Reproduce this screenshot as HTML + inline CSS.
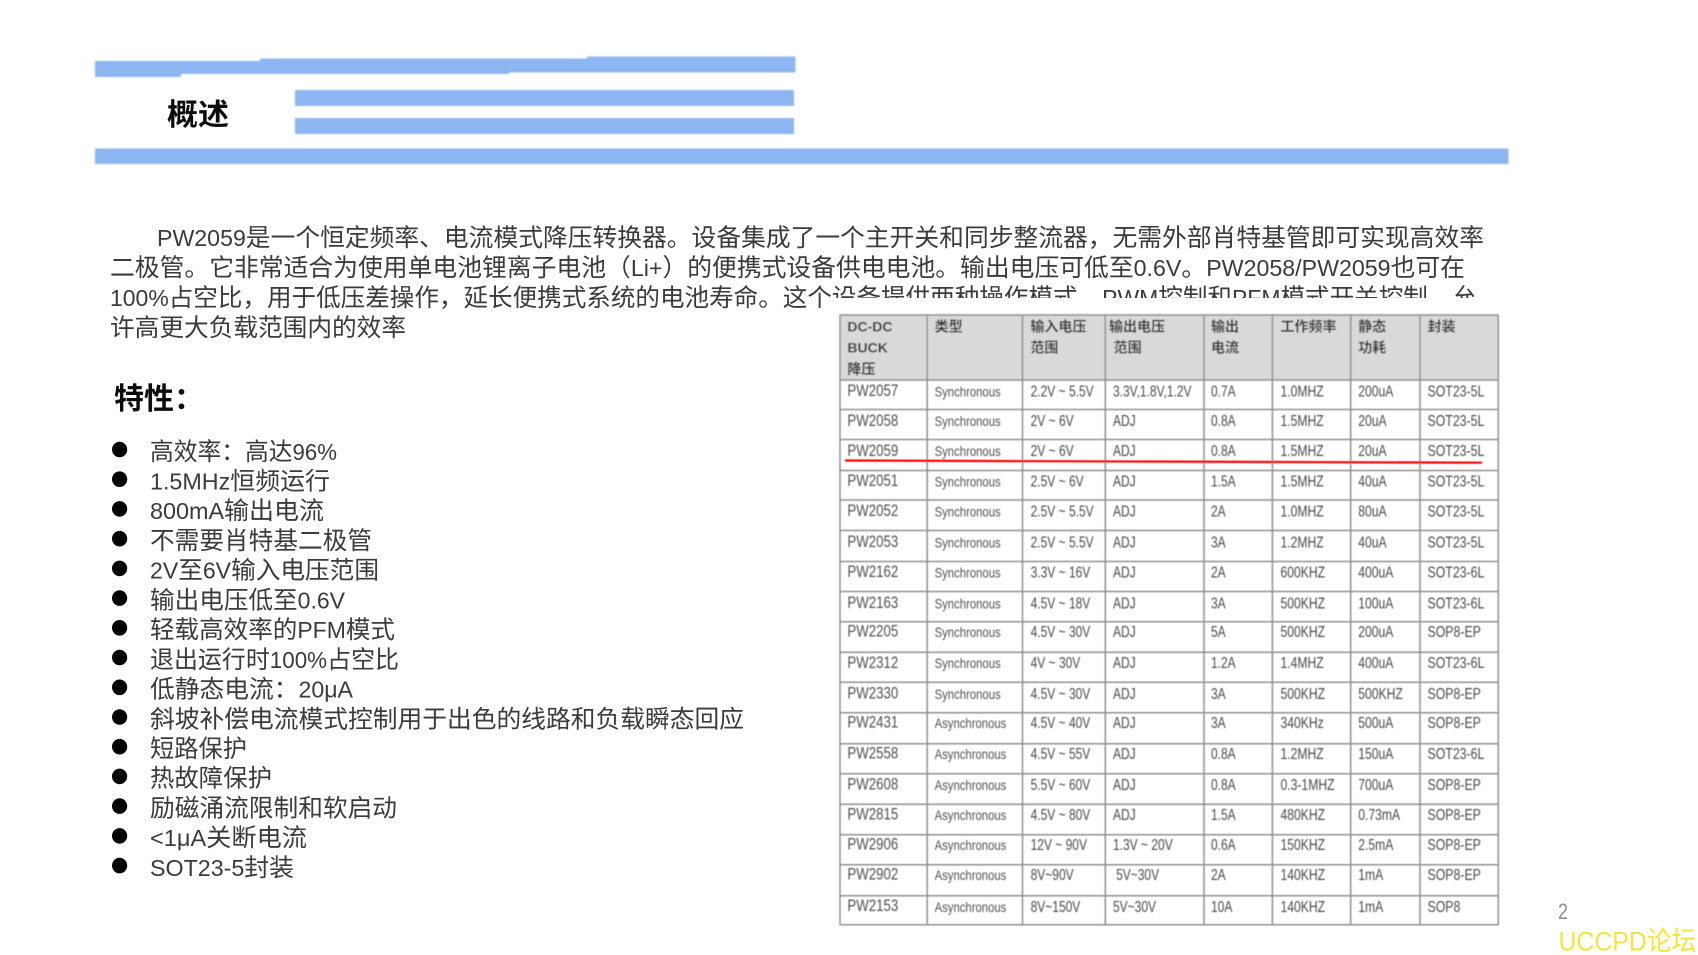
<!DOCTYPE html>
<html lang="zh-CN">
<head>
<meta charset="utf-8">
<title>PW2059 概述</title>
<style>
html,body{margin:0;padding:0;background:#fff;width:1698px;height:955px;overflow:hidden}
svg{display:block}
text{font-family:"Liberation Sans","Noto Sans CJK SC",sans-serif;white-space:pre}
.b{fill:#3a3a3a;font-size:24.6px}
.l{font-size:23px}
.h{fill:#111;font-weight:700;font-size:30px}
.pw text{font-size:17px;fill:#505050}
.sy text{font-size:14px;fill:#505050}
.c text{font-size:15.6px;fill:#484848}
.hd text{font-size:14px;font-weight:700;fill:#3a3a3a}
.bar{fill:#8cb5f1}
</style>
</head>
<body>
<svg width="1698" height="955" viewBox="0 0 1698 955" xmlns="http://www.w3.org/2000/svg">
<defs>
<filter id="s" x="-2%" y="-2%" width="104%" height="104%"><feGaussianBlur stdDeviation="0.55"/></filter>
<filter id="t" x="-2%" y="-2%" width="104%" height="104%"><feGaussianBlur stdDeviation="0.25"/></filter>
<filter id="u" x="-2%" y="-20%" width="104%" height="140%"><feGaussianBlur stdDeviation="0.9"/></filter>
</defs>
<rect width="1698" height="955" fill="#fff"/>

<g filter="url(#u)">
<rect class="bar" x="95" y="61" width="86" height="16"/>
<rect class="bar" x="181" y="61" width="79" height="13"/>
<rect class="bar" x="260" y="58.5" width="249" height="15.5"/>
<rect class="bar" x="509" y="58.5" width="78" height="14"/>
<rect class="bar" x="587" y="56.5" width="208.5" height="16"/>
<rect class="bar" x="295" y="90" width="499" height="16"/>
<rect class="bar" x="295" y="118" width="499" height="16"/>
<rect class="bar" x="95" y="148.5" width="1413.5" height="15.5"/>
</g>

<g filter="url(#t)">
<text class="h" x="167" y="125" textLength="62" lengthAdjust="spacingAndGlyphs">概述</text>

<text class="b" x="157" y="246" textLength="1327" lengthAdjust="spacingAndGlyphs"><tspan class="l">PW2059</tspan>是一个恒定频率、电流模式降压转换器。设备集成了一个主开关和同步整流器，无需外部肖特基管即可实现高效率</text>
<text class="b" x="110" y="276" textLength="1355" lengthAdjust="spacingAndGlyphs">二极管。它非常适合为使用单电池锂离子电池（<tspan class="l">Li+</tspan>）的便携式设备供电电池。输出电压可低至<tspan class="l">0.6V</tspan>。<tspan class="l">PW2058/PW2059</tspan>也可在</text>
<text class="b" x="110" y="306" textLength="1367" lengthAdjust="spacingAndGlyphs"><tspan class="l">100%</tspan>占空比，用于低压差操作，延长便携式系统的电池寿命。这个设备提供两种操作模式，<tspan class="l">PWM</tspan>控制和<tspan class="l">PFM</tspan>模式开关控制，允</text>
<rect x="830" y="298" width="680" height="18" fill="#fff"/>
<text class="b" x="110" y="336" textLength="296" lengthAdjust="spacingAndGlyphs">许高更大负载范围内的效率</text>

<text class="h" x="114" y="409" textLength="90" lengthAdjust="spacingAndGlyphs">特性：</text>

<g fill="#000">
<ellipse cx="119.6" cy="449.5" rx="7.6" ry="7.8"/>
<ellipse cx="119.6" cy="479.2" rx="7.6" ry="7.8"/>
<ellipse cx="119.6" cy="508.9" rx="7.6" ry="7.8"/>
<ellipse cx="119.6" cy="538.7" rx="7.6" ry="7.8"/>
<ellipse cx="119.6" cy="568.4" rx="7.6" ry="7.8"/>
<ellipse cx="119.6" cy="598.1" rx="7.6" ry="7.8"/>
<ellipse cx="119.6" cy="627.8" rx="7.6" ry="7.8"/>
<ellipse cx="119.6" cy="657.5" rx="7.6" ry="7.8"/>
<ellipse cx="119.6" cy="687.3" rx="7.6" ry="7.8"/>
<ellipse cx="119.6" cy="717" rx="7.6" ry="7.8"/>
<ellipse cx="119.6" cy="746.7" rx="7.6" ry="7.8"/>
<ellipse cx="119.6" cy="776.4" rx="7.6" ry="7.8"/>
<ellipse cx="119.6" cy="806.1" rx="7.6" ry="7.8"/>
<ellipse cx="119.6" cy="835.9" rx="7.6" ry="7.8"/>
<ellipse cx="119.6" cy="865.6" rx="7.6" ry="7.8"/>
</g>

<text class="b" x="150" y="460" textLength="187" lengthAdjust="spacingAndGlyphs">高效率：高达<tspan class="l">96%</tspan></text>
<text class="b" x="150" y="489.5" textLength="180" lengthAdjust="spacingAndGlyphs"><tspan class="l">1.5MHz</tspan>恒频运行</text>
<text class="b" x="150" y="519.2" textLength="174" lengthAdjust="spacingAndGlyphs"><tspan class="l">800mA</tspan>输出电流</text>
<text class="b" x="150" y="549" textLength="222" lengthAdjust="spacingAndGlyphs">不需要肖特基二极管</text>
<text class="b" x="150" y="578.7" textLength="229" lengthAdjust="spacingAndGlyphs"><tspan class="l">2V</tspan>至<tspan class="l">6V</tspan>输入电压范围</text>
<text class="b" x="150" y="608.4" textLength="195" lengthAdjust="spacingAndGlyphs">输出电压低至<tspan class="l">0.6V</tspan></text>
<text class="b" x="150" y="638.1" textLength="245" lengthAdjust="spacingAndGlyphs">轻载高效率的<tspan class="l">PFM</tspan>模式</text>
<text class="b" x="150" y="667.9" textLength="249" lengthAdjust="spacingAndGlyphs">退出运行时<tspan class="l">100%</tspan>占空比</text>
<text class="b" x="150" y="697.6" textLength="203" lengthAdjust="spacingAndGlyphs">低静态电流：<tspan class="l">20μA</tspan></text>
<text class="b" x="150" y="727.3" textLength="594" lengthAdjust="spacingAndGlyphs">斜坡补偿电流模式控制用于出色的线路和负载瞬态回应</text>
<text class="b" x="150" y="757" textLength="97" lengthAdjust="spacingAndGlyphs">短路保护</text>
<text class="b" x="150" y="786.7" textLength="122" lengthAdjust="spacingAndGlyphs">热故障保护</text>
<text class="b" x="150" y="816.5" textLength="247" lengthAdjust="spacingAndGlyphs">励磁涌流限制和软启动</text>
<text class="b" x="150" y="846.2" textLength="157" lengthAdjust="spacingAndGlyphs"><tspan class="l">&lt;1μA</tspan>关断电流</text>
<text class="b" x="150" y="875.9" textLength="144" lengthAdjust="spacingAndGlyphs"><tspan class="l">SOT23-5</tspan>封装</text>
</g>

<g filter="url(#s)">
<rect x="840" y="315" width="658.3" height="65" fill="#d9d9d9"/>
<g stroke="#8f8f8f" stroke-width="1.5" fill="none">
<path d="M840 315H1498.3M840 380H1498.3M840 409.5H1498.3M840 439.5H1498.3M840 470.5H1498.3M840 500H1498.3M840 530.5H1498.3M840 561.5H1498.3M840 591.5H1498.3M840 621.7H1498.3M840 652.3H1498.3M840 682.3H1498.3M840 712.7H1498.3M840 743.7H1498.3M840 773.7H1498.3M840 804.3H1498.3M840 834.7H1498.3M840 864.7H1498.3M840 895.7H1498.3M840 924.7H1498.3"/>
<path d="M840 315V925M927.2 315V925M1022.5 315V925M1105.3 315V925M1204 315V925M1272.4 315V925M1350.7 315V925M1420 315V925M1498.3 315V925"/>
</g>
<g class="hd">
<text x="847.4" y="331.5">DC-DC</text>
<text x="847.4" y="352.5">BUCK</text>
<text x="847.4" y="374">降压</text>
<text x="934.6" y="331.5">类型</text>
<text x="1030.4" y="331.5">输入电压</text>
<text x="1030.4" y="352.5">范围</text>
<text x="1109" y="331.5">输出电压</text>
<text x="1113.6" y="352.5">范围</text>
<text x="1211" y="331.5">输出</text>
<text x="1211" y="352.5">电流</text>
<text x="1280.5" y="331.5">工作频率</text>
<text x="1358.2" y="331.5">静态</text>
<text x="1358.2" y="352.5">功耗</text>
<text x="1427.5" y="331.5">封装</text>
</g>

<g class="pw" transform="translate(847.4,0) scale(.78,1)">
<text y="396">PW2057</text><text y="426">PW2058</text><text y="456">PW2059</text><text y="486">PW2051</text><text y="516">PW2052</text><text y="547">PW2053</text><text y="577">PW2162</text><text y="608">PW2163</text><text y="636.5">PW2205</text><text y="668">PW2312</text><text y="698.5">PW2330</text><text y="727.5">PW2431</text><text y="758.5">PW2558</text><text y="789.5">PW2608</text><text y="819.5">PW2815</text><text y="849.5">PW2906</text><text y="879.5">PW2902</text><text y="911">PW2153</text>
</g>

<g class="sy" transform="translate(934.6,0) scale(.81,1)">
<text y="396.5">Synchronous</text><text y="426">Synchronous</text><text y="456">Synchronous</text><text y="486.7">Synchronous</text><text y="516.7">Synchronous</text><text y="547.3">Synchronous</text><text y="577.7">Synchronous</text><text y="608.3">Synchronous</text><text y="637">Synchronous</text><text y="668">Synchronous</text><text y="699">Synchronous</text><text y="728">Asynchronous</text><text y="759">Asynchronous</text><text y="790">Asynchronous</text><text y="820">Asynchronous</text><text y="850">Asynchronous</text><text y="880">Asynchronous</text><text y="912">Asynchronous</text>
</g>

<g class="c" transform="translate(1030.6,0) scale(.77,1)">
<text y="396.5">2.2V ~ 5.5V</text><text y="426">2V ~ 6V</text><text y="456">2V ~ 6V</text><text y="486.7">2.5V ~ 6V</text><text y="516.7">2.5V ~ 5.5V</text><text y="547.3">2.5V ~ 5.5V</text><text y="577.7">3.3V ~ 16V</text><text y="608.3">4.5V ~ 18V</text><text y="637">4.5V ~ 30V</text><text y="668">4V ~ 30V</text><text y="699">4.5V ~ 30V</text><text y="728">4.5V ~ 40V</text><text y="759">4.5V ~ 55V</text><text y="790">5.5V ~ 60V</text><text y="820">4.5V ~ 80V</text><text y="850">12V ~ 90V</text><text y="880">8V~90V</text><text y="912">8V~150V</text>
</g>

<g class="c" transform="translate(1113,0) scale(.77,1)">
<text y="396.5">3.3V,1.8V,1.2V</text><text y="426">ADJ</text><text y="456">ADJ</text><text y="486.7">ADJ</text><text y="516.7">ADJ</text><text y="547.3">ADJ</text><text y="577.7">ADJ</text><text y="608.3">ADJ</text><text y="637">ADJ</text><text y="668">ADJ</text><text y="699">ADJ</text><text y="728">ADJ</text><text y="759">ADJ</text><text y="790">ADJ</text><text y="820">ADJ</text><text y="850">1.3V ~ 20V</text><text y="880" x="4">5V~30V</text><text y="912">5V~30V</text>
</g>

<g class="c" transform="translate(1211,0) scale(.77,1)">
<text y="396.5">0.7A</text><text y="426">0.8A</text><text y="456">0.8A</text><text y="486.7">1.5A</text><text y="516.7">2A</text><text y="547.3">3A</text><text y="577.7">2A</text><text y="608.3">3A</text><text y="637">5A</text><text y="668">1.2A</text><text y="699">3A</text><text y="728">3A</text><text y="759">0.8A</text><text y="790">0.8A</text><text y="820">1.5A</text><text y="850">0.6A</text><text y="880">2A</text><text y="912">10A</text>
</g>

<g class="c" transform="translate(1280.5,0) scale(.78,1)">
<text y="396.5">1.0MHZ</text><text y="426">1.5MHZ</text><text y="456">1.5MHZ</text><text y="486.7">1.5MHZ</text><text y="516.7">1.0MHZ</text><text y="547.3">1.2MHZ</text><text y="577.7">600KHZ</text><text y="608.3">500KHZ</text><text y="637">500KHZ</text><text y="668">1.4MHZ</text><text y="699">500KHZ</text><text y="728">340KHz</text><text y="759">1.2MHZ</text><text y="790">0.3-1MHZ</text><text y="820">480KHZ</text><text y="850">150KHZ</text><text y="880">140KHZ</text><text y="912">140KHZ</text>
</g>

<g class="c" transform="translate(1358.2,0) scale(.78,1)">
<text y="396.5">200uA</text><text y="426">20uA</text><text y="456">20uA</text><text y="486.7">40uA</text><text y="516.7">80uA</text><text y="547.3">40uA</text><text y="577.7">400uA</text><text y="608.3">100uA</text><text y="637">200uA</text><text y="668">400uA</text><text y="699">500KHZ</text><text y="728">500uA</text><text y="759">150uA</text><text y="790">700uA</text><text y="820">0.73mA</text><text y="850">2.5mA</text><text y="880">1mA</text><text y="912">1mA</text>
</g>

<g class="c" transform="translate(1427.5,0) scale(.79,1)">
<text y="396.5">SOT23-5L</text><text y="426">SOT23-5L</text><text y="456">SOT23-5L</text><text y="486.7">SOT23-5L</text><text y="516.7">SOT23-5L</text><text y="547.3">SOT23-5L</text><text y="577.7">SOT23-6L</text><text y="608.3">SOT23-6L</text><text y="637">SOP8-EP</text><text y="668">SOT23-6L</text><text y="699">SOP8-EP</text><text y="728">SOP8-EP</text><text y="759">SOT23-6L</text><text y="790">SOP8-EP</text><text y="820">SOP8-EP</text><text y="850">SOP8-EP</text><text y="880">SOP8-EP</text><text y="912">SOP8</text>
</g>

<path d="M845 460.5L1482 462.7" stroke="#ff0000" stroke-width="2.2" fill="none"/>
</g>

<g filter="url(#t)">
<text x="1558" y="919" font-size="22" fill="#8c8c8c" textLength="10" lengthAdjust="spacingAndGlyphs">2</text>
<text x="1558.5" y="950.5" font-size="27" fill="#f4e53c" textLength="138" lengthAdjust="spacingAndGlyphs">UCCPD论坛</text>
</g>
</svg>
</body>
</html>
